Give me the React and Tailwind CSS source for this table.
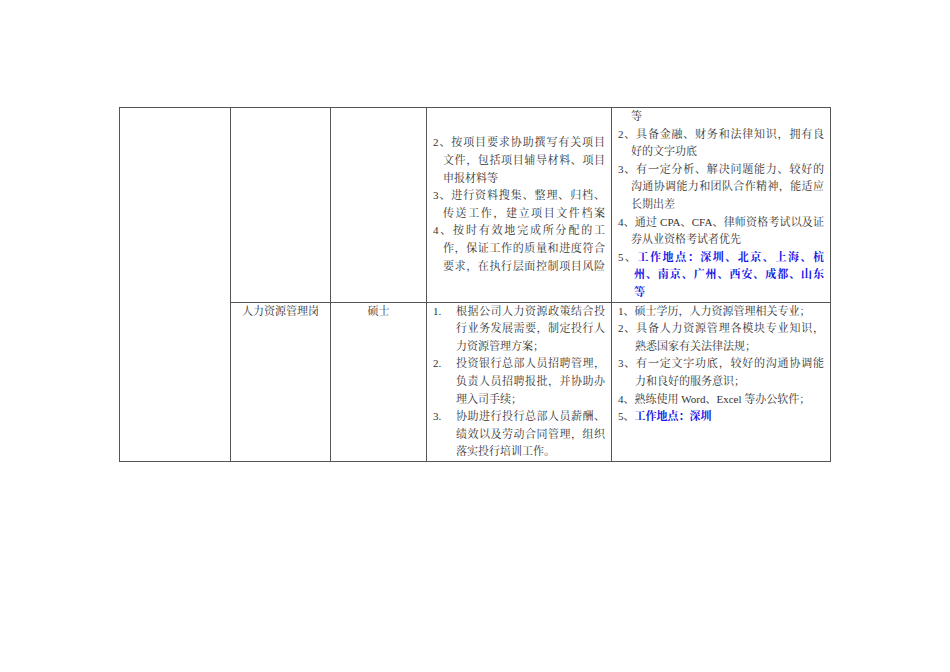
import clsx from 'clsx';

// 每一行单独排版，保证换行位置和原文档一致
const Line = ({ children, justify, indent }) => (
  <div
    className={clsx(
      justify && 'text-justify [text-align-last:justify]',
      indent
    )}
  >
    {children}
  </div>
);

const Blue = ({ children }) => (
  <span className="font-bold text-[#1414e6]">{children}</span>
);

const NumItem = ({ n, lines }) => (
  <div className="flex">
    <div className="w-[23px] shrink-0">{n}</div>
    <div className="flex-1">
      {lines.map((l, i) => (
        <Line key={i} justify={i < lines.length - 1}>
          {l}
        </Line>
      ))}
    </div>
  </div>
);

const App = () => {
  const cell = 'border border-[#555] px-[6px] py-0';

  return (
    <div className="min-h-[672px] bg-white pt-[107px] pl-[119px] font-['Liberation_Serif','Noto_Serif_CJK_SC','Noto_Sans_CJK_SC',serif] text-[11px] leading-[17.6px] text-[#333]">
      <table className="table-fixed border-collapse w-[712px]">
        <colgroup>
          <col className="w-[111px]" />
          <col className="w-[100px]" />
          <col className="w-[96px]" />
          <col className="w-[185px]" />
          <col className="w-[219px]" />
        </colgroup>
        <tbody>
          <tr>
            <td rowSpan={2} className={cell}></td>
            <td className={cell}></td>
            <td className={cell}></td>
            <td className={clsx(cell, 'align-middle')}>
              <Line justify>2、按项目要求协助撰写有关项目</Line>
              <Line justify indent="pl-[10px]">文件，包括项目辅导材料、项目</Line>
              <Line indent="pl-[10px]">申报材料等</Line>
              <Line justify>3、进行资料搜集、整理、归档、</Line>
              <Line justify indent="pl-[10px]">传送工作，建立项目文件档案</Line>
              <Line justify>4、按时有效地完成所分配的工</Line>
              <Line justify indent="pl-[10px]">作，保证工作的质量和进度符合</Line>
              <Line justify indent="pl-[10px]">要求，在执行层面控制项目风险</Line>
            </td>
            <td className={clsx(cell, 'align-top')}>
              <Line indent="pl-[13px]">等</Line>
              <Line justify>2、具备金融、财务和法律知识，拥有良</Line>
              <Line indent="pl-[13px]">好的文字功底</Line>
              <Line justify>3、有一定分析、解决问题能力、较好的</Line>
              <Line justify indent="pl-[13px]">沟通协调能力和团队合作精神，能适应</Line>
              <Line indent="pl-[13px]">长期出差</Line>
              <Line justify>4、通过 CPA、CFA、律师资格考试以及证</Line>
              <Line indent="pl-[13px]">券从业资格考试者优先</Line>
              <Line justify>
                5、<Blue>工作地点：深圳、北京、上海、杭</Blue>
              </Line>
              <Line justify indent="pl-[16px]">
                <Blue>州、南京、广州、西安、成都、山东</Blue>
              </Line>
              <Line indent="pl-[16px]">
                <Blue>等</Blue>
              </Line>
            </td>
          </tr>
          <tr>
            <td className={clsx(cell, 'align-top text-center')}>人力资源管理岗</td>
            <td className={clsx(cell, 'align-top text-center')}>硕士</td>
            <td className={clsx(cell, 'align-top')}>
              <NumItem
                n="1."
                lines={['根据公司人力资源政策结合投', '行业务发展需要，制定投行人', '力资源管理方案；']}
              />
              <NumItem
                n="2."
                lines={['投资银行总部人员招聘管理，', '负责人员招聘报批，并协助办', '理入司手续；']}
              />
              <NumItem
                n="3."
                lines={['协助进行投行总部人员薪酬、', '绩效以及劳动合同管理，组织', '落实投行培训工作。']}
              />
            </td>
            <td className={clsx(cell, 'align-top')}>
              <Line>1、硕士学历，人力资源管理相关专业；</Line>
              <Line justify>2、具备人力资源管理各模块专业知识，</Line>
              <Line indent="pl-[17px]">熟悉国家有关法律法规；</Line>
              <Line justify>3、有一定文字功底，较好的沟通协调能</Line>
              <Line indent="pl-[17px]">力和良好的服务意识；</Line>
              <Line>4、熟练使用 Word、Excel 等办公软件；</Line>
              <Line>
                5、<Blue>工作地点：深圳</Blue>
              </Line>
            </td>
          </tr>
        </tbody>
      </table>
    </div>
  );
};

export default App;
